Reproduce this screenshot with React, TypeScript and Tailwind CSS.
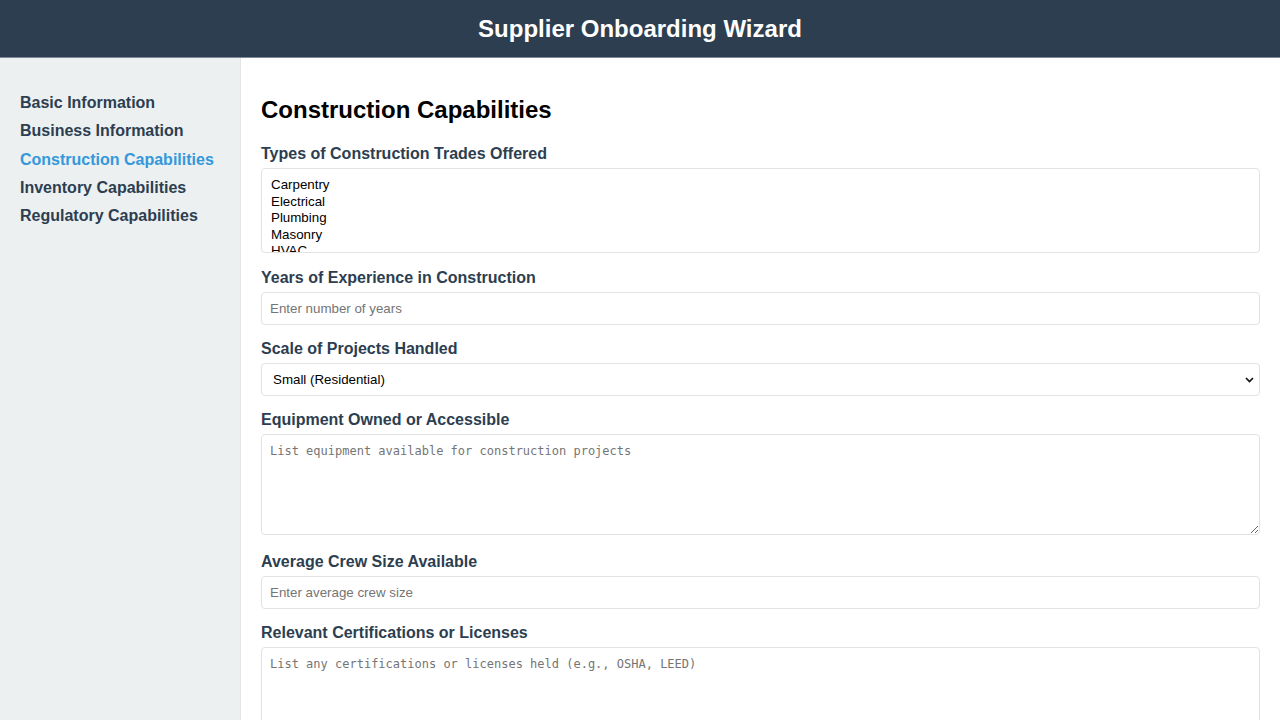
import React from "react";

const navItems = [
  "Basic Information",
  "Business Information",
  "Construction Capabilities",
  "Inventory Capabilities",
  "Regulatory Capabilities",
];

const trades = ["Carpentry", "Electrical", "Plumbing", "Masonry", "HVAC", "Roofing", "Painting"];

const Label = ({ children }: { children: React.ReactNode }) => (
  <label className="block text-base font-bold leading-[18px] text-[#2c3e50] mb-[5px]">{children}</label>
);

const inputCls =
  "block w-full h-[33px] border border-[#e2e2e2] rounded-[4px] px-[8px] text-[13.33px] text-black placeholder:text-[#757575] outline-none font-['Liberation_Sans',Arial,sans-serif]";

const textareaCls =
  "block w-full border border-[#e2e2e2] rounded-[4px] px-[8px] pt-[9px] pb-[8px] text-[12px] leading-[15px] text-black placeholder:text-[#757575] outline-none font-['DejaVu_Sans_Mono',monospace]";

export default function App() {
  return (
    <div className="min-h-screen flex flex-col font-['Liberation_Sans',Arial,sans-serif]">
      <header className="h-[58px] bg-[#2c3e50] border-b border-[#7d8896] flex items-center justify-center shrink-0">
        <h1 className="text-white text-[24px] font-bold leading-[28px]">Supplier Onboarding Wizard</h1>
      </header>
      <div className="flex flex-1">
        <aside className="w-[241px] shrink-0 bg-[#ecf0f1] border-r border-[#e3e6e8] pt-[36px] px-[20px]">
          <ul className="flex flex-col gap-[10.25px]">
            {navItems.map((item) => (
              <li
                key={item}
                className={
                  "text-base font-bold leading-[18px] " +
                  (item === "Construction Capabilities" ? "text-[#3498db]" : "text-[#2c3e50]")
                }
              >
                {item}
              </li>
            ))}
          </ul>
        </aside>
        <main className="flex-1 bg-white px-[20px] pt-[38px] pb-[40px]">
          <h2 className="text-[24px] font-bold leading-[28px] text-black mb-[21px]">Construction Capabilities</h2>

          <Label>Types of Construction Trades Offered</Label>
          <div className="w-full h-[85px] border border-[#e2e2e2] rounded-[4px] overflow-hidden pl-[9px] pt-[8px] mb-[16px]">
            {trades.map((t) => (
              <div key={t} className="text-[13.33px] leading-[16.5px] text-black">
                {t}
              </div>
            ))}
          </div>

          <Label>Years of Experience in Construction</Label>
          <input className={inputCls + " mb-[15px]"} placeholder="Enter number of years" />

          <Label>Scale of Projects Handled</Label>
          <div className="w-full h-[33px] border border-[#e2e2e2] rounded-[4px] flex items-center justify-between pl-[11px] pr-[5px] mb-[15px]">
            <span className="text-[13.33px] text-black">Small (Residential)</span>
            <svg width="9" height="6" viewBox="0 0 9 6" fill="none">
              <path d="M1 1l3.5 3.5L8 1" stroke="#111" strokeWidth="1.7" />
            </svg>
          </div>

          <Label>Equipment Owned or Accessible</Label>
          <textarea
            className={textareaCls + " h-[101px] mb-[18px]"}
            placeholder="List equipment available for construction projects"
          />

          <Label>Average Crew Size Available</Label>
          <input className={inputCls + " mb-[15px]"} placeholder="Enter average crew size" />

          <Label>Relevant Certifications or Licenses</Label>
          <textarea
            className={textareaCls + " h-[101px] mb-[18px]"}
            placeholder="List any certifications or licenses held (e.g., OSHA, LEED)"
          />
        </main>
      </div>
    </div>
  );
}
